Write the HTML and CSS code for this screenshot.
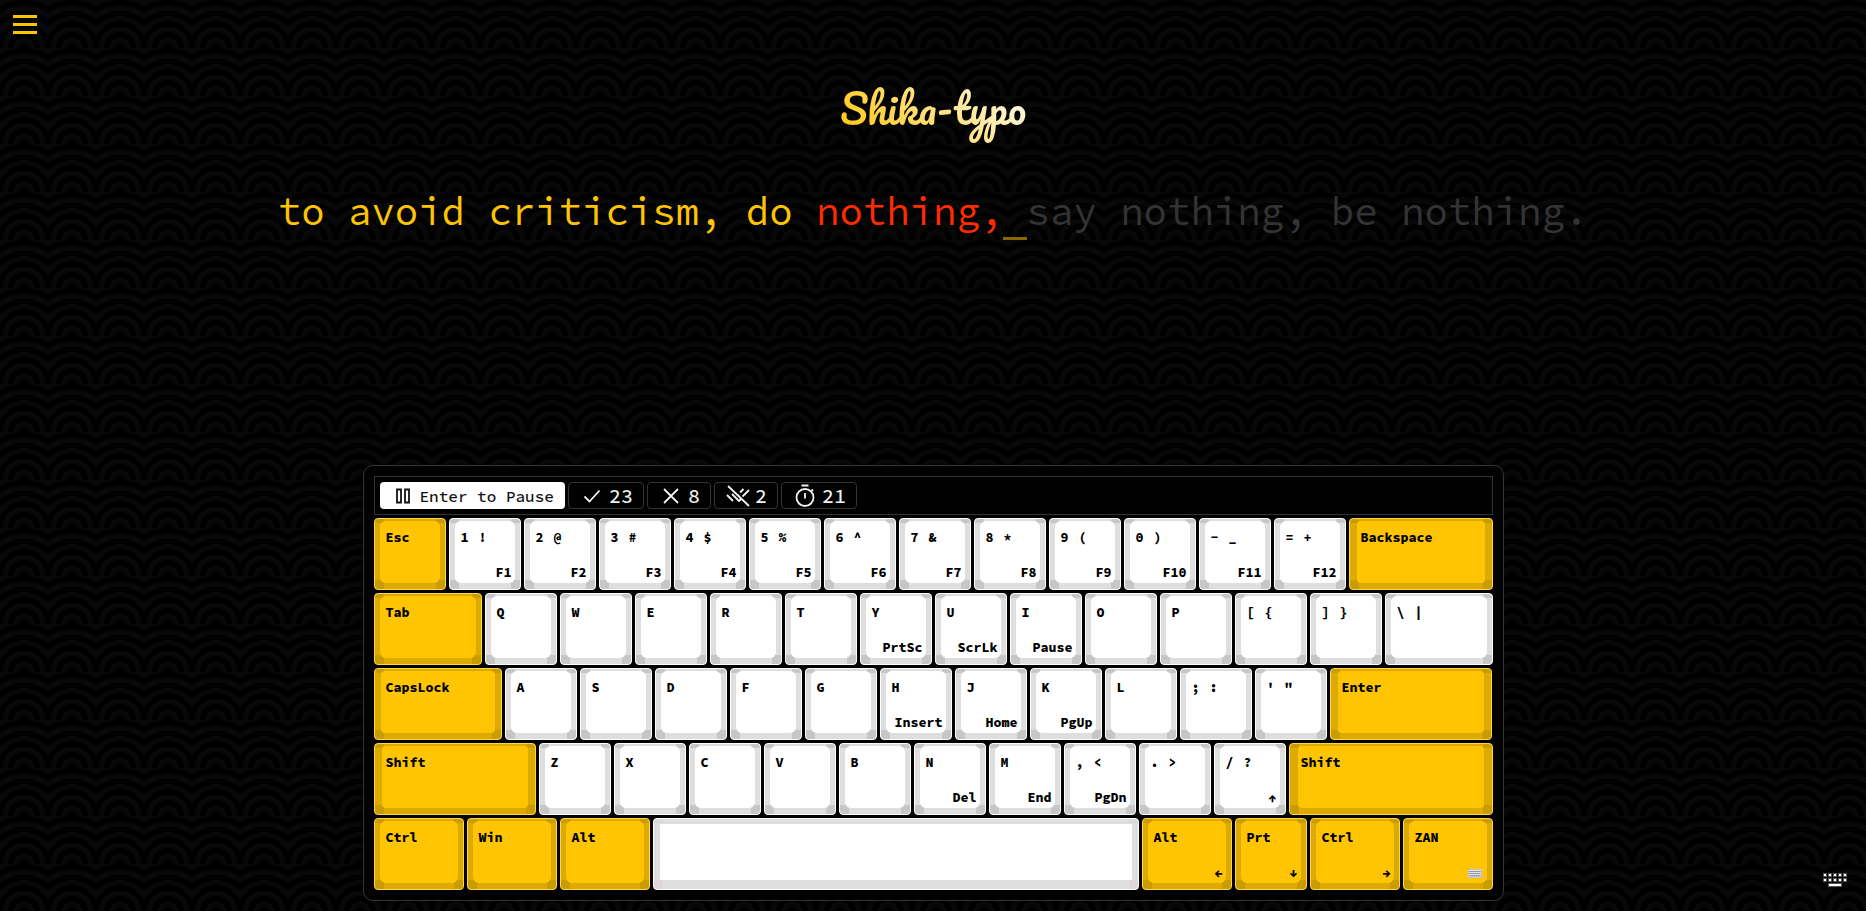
FILE: index.html
```html
<!DOCTYPE html>
<html lang="en">
<head>
<meta charset="utf-8">
<title>Shika-typo</title>
<link rel="stylesheet" href="styles.css">
</head>
<body>
<button class="menu" aria-label="Open menu"><span></span><span></span><span></span></button>
<h1 class="logo">Shika-typo</h1>
<p class="quote"><span class="typed">to avoid criticism, do </span><span class="wrong">nothing,</span><span class="cursor"> </span>say nothing, be nothing.</p>

<main class="board">
  <div class="status">
    <button class="pause"><svg viewBox="0 0 24 24"><path d="M6 5.500h4v13H6zM14 5.500h4v13h-4z"/></svg>Enter to Pause</button>
    <div class="stat"><svg viewBox="0 0 24 24"><path d="M4.500 12.500l5 5L19.500 6.500"/></svg>23</div>
    <div class="stat"><svg viewBox="0 0 24 24"><path d="M5 5l14 14M19 5L5 19"/></svg>8</div>
    <div class="stat"><svg viewBox="0 0 24 24"><path d="M2 2l21 20M1 11l6 6M6 10l7 7 2.500-2.500M12 11l1 1M16.500 12.500L23 6M14 8.500L17.500 5"/></svg>2</div>
    <div class="stat"><svg viewBox="0 0 24 24"><circle cx="12" cy="13.500" r="8.500"/><path d="M8.500 1.500h7M12 9v5.500M18.500 7l1.500-1.500"/></svg>21</div>
  </div>

  <div class="row">
    <button class="key mod"><span class="top">Esc</span></button>
    <button class="key"><span class="top"><i>1</i><i>!</i></span><span class="fn">F1</span></button>
    <button class="key"><span class="top"><i>2</i><i>@</i></span><span class="fn">F2</span></button>
    <button class="key"><span class="top"><i>3</i><i>#</i></span><span class="fn">F3</span></button>
    <button class="key"><span class="top"><i>4</i><i>$</i></span><span class="fn">F4</span></button>
    <button class="key"><span class="top"><i>5</i><i>%</i></span><span class="fn">F5</span></button>
    <button class="key"><span class="top"><i>6</i><i>^</i></span><span class="fn">F6</span></button>
    <button class="key"><span class="top"><i>7</i><i>&amp;</i></span><span class="fn">F7</span></button>
    <button class="key"><span class="top"><i>8</i><i>*</i></span><span class="fn">F8</span></button>
    <button class="key"><span class="top"><i>9</i><i>(</i></span><span class="fn">F9</span></button>
    <button class="key"><span class="top"><i>0</i><i>)</i></span><span class="fn">F10</span></button>
    <button class="key"><span class="top"><i>-</i><i>_</i></span><span class="fn">F11</span></button>
    <button class="key"><span class="top"><i>=</i><i>+</i></span><span class="fn">F12</span></button>
    <button class="key mod w200"><span class="top">Backspace</span></button>
  </div>
  <div class="row">
    <button class="key mod w150"><span class="top">Tab</span></button>
    <button class="key"><span class="top">Q</span></button>
    <button class="key"><span class="top">W</span></button>
    <button class="key"><span class="top">E</span></button>
    <button class="key"><span class="top">R</span></button>
    <button class="key"><span class="top">T</span></button>
    <button class="key"><span class="top">Y</span><span class="fn">PrtSc</span></button>
    <button class="key"><span class="top">U</span><span class="fn">ScrLk</span></button>
    <button class="key"><span class="top">I</span><span class="fn">Pause</span></button>
    <button class="key"><span class="top">O</span></button>
    <button class="key"><span class="top">P</span></button>
    <button class="key"><span class="top"><i>[</i><i>{</i></span></button>
    <button class="key"><span class="top"><i>]</i><i>}</i></span></button>
    <button class="key w150"><span class="top"><i>\</i><i>|</i></span></button>
  </div>
  <div class="row">
    <button class="key mod w175"><span class="top">CapsLock</span></button>
    <button class="key"><span class="top">A</span></button>
    <button class="key"><span class="top">S</span></button>
    <button class="key"><span class="top">D</span></button>
    <button class="key"><span class="top">F</span></button>
    <button class="key"><span class="top">G</span></button>
    <button class="key"><span class="top">H</span><span class="fn">Insert</span></button>
    <button class="key"><span class="top">J</span><span class="fn">Home</span></button>
    <button class="key"><span class="top">K</span><span class="fn">PgUp</span></button>
    <button class="key"><span class="top">L</span></button>
    <button class="key"><span class="top"><i>;</i><i>:</i></span></button>
    <button class="key"><span class="top"><i>'</i><i>"</i></span></button>
    <button class="key mod w225"><span class="top">Enter</span></button>
  </div>
  <div class="row">
    <button class="key mod w225"><span class="top">Shift</span></button>
    <button class="key"><span class="top">Z</span></button>
    <button class="key"><span class="top">X</span></button>
    <button class="key"><span class="top">C</span></button>
    <button class="key"><span class="top">V</span></button>
    <button class="key"><span class="top">B</span></button>
    <button class="key"><span class="top">N</span><span class="fn">Del</span></button>
    <button class="key"><span class="top">M</span><span class="fn">End</span></button>
    <button class="key"><span class="top"><i>,</i><i>&lt;</i></span><span class="fn">PgDn</span></button>
    <button class="key"><span class="top"><i>.</i><i>&gt;</i></span></button>
    <button class="key"><span class="top"><i>/</i><i>?</i></span><span class="fn">↑</span></button>
    <button class="key mod w275"><span class="top">Shift</span></button>
  </div>
  <div class="row">
    <button class="key mod w125"><span class="top">Ctrl</span></button>
    <button class="key mod w125"><span class="top">Win</span></button>
    <button class="key mod w125"><span class="top">Alt</span></button>
    <button class="key space" aria-label="Space"></button>
    <button class="key mod w125"><span class="top">Alt</span><span class="fn">←</span></button>
    <button class="key mod"><span class="top">Prt</span><span class="fn">↓</span></button>
    <button class="key mod w125"><span class="top">Ctrl</span><span class="fn">→</span></button>
    <button class="key mod w125"><span class="top">ZAN</span><span class="fn"><svg class="mini" viewBox="0 0 14 9"><rect width="14" height="9" rx="1" fill="#c4c4d0" stroke="none"/><path d="M1 2.500h12M1 4.500h12M2 6.500h10" stroke="#8a8a9c" stroke-dasharray="1.500 .5"/><path d="M1 1.500h12M1 3.500h12M1 5.500h12" stroke="#e4e4ec"/></svg></span></button>
  </div>
</main>

<button class="toggle" aria-label="Toggle keyboard"><svg viewBox="0 0 24 14"><path fill="#555" d="M0 0h4v4H0zM5 0h4v4H5zM10 0h4v4h-4zM15 0h4v4h-4zM20 0h4v4h-4zM0 5h4v4H0zM5 5h4v4H5zM10 5h4v4h-4zM15 5h4v4h-4zM20 5h4v4h-4zM5 10h14v4H5z"/><path fill="#fff" d="M1 1h2v2H1zM6 1h2v2H6zM11 1h2v2h-2zM16 1h2v2h-2zM21 1h2v2h-2zM1 6h2v2H1zM6 6h2v2H6zM11 6h2v2h-2zM16 6h2v2h-2zM21 6h2v2h-2zM6 11h12v2H6z"/></svg></button>
</body>
</html>
```
FILE: styles.css
```css
* { box-sizing: border-box; }

body {
  margin: 0;
  min-height: 100vh;
  padding: 73px 10px 10px;
  display: flex;
  flex-direction: column;
  align-items: center;
  background: #000 repeating-radial-gradient(circle 32px at 50% 100%, #000 0 16.667%, #080808 16.667% 33.333%) 0 0 / 48px 48px;
  color: #333;
  font-family: "Source Code Pro", "DejaVu Sans Mono", monospace;
}

button {
  margin: 0;
  padding: 0;
  border: 0;
  background: none;
  font-family: inherit;
  color: inherit;
  cursor: pointer;
}

svg { fill: none; stroke: currentColor; stroke-width: 1.8; }

.menu {
  position: absolute;
  top: 15px;
  left: 13px;
  width: 24px;
  display: grid;
  gap: 5px;
}
.menu span { height: 3px; background: #ffc400; }

.toggle { position: absolute; right: 19px; bottom: 24px; width: 24px; height: 14px; }
.toggle svg { display: block; stroke: none; }

.logo {
  margin: 0;
  font: 400 40px/70px Pacifico, cursive;
  background: linear-gradient(45deg, #ffc400, #fff);
  -webkit-background-clip: text;
  background-clip: text;
  color: transparent;
}

.quote {
  margin: 44px 0 32px;
  font-size: 39px;
  line-height: 49px;
  text-align: center;
}
.typed { color: #ffc400; }
.wrong { color: #ff2b00; }
.cursor { padding-bottom: 1px; border-bottom: 3px solid #866700; white-space: pre; }

.board {
  margin-top: auto;
  padding: 10px;
  display: grid;
  gap: 3px;
  border: 1px solid #333;
  border-radius: 10px;
  background: #010101;
}

.status {
  display: flex;
  gap: 3px;
  padding: 5px;
  border: 1px solid #333;
}
.pause, .stat {
  display: flex;
  align-items: center;
  gap: 5px;
  height: 27px;
  padding: 0 10px 0 11px;
  border-radius: 4px;
  font-weight: 500;
}
.pause { padding-right: 11px; background: #fff; color: #111; font-size: 16px; }
.stat { border: 1px solid #333; color: #f2f2f2; font-size: 20px; }
.status svg { width: 24px; height: 24px; }

.row { display: flex; gap: 3px; }

.key {
  --side: 5px;
  --face: #fff;
  --edge: #dedede;
  --corner: #c6c6c6;
  --rim: #fff;
  position: relative;
  isolation: isolate;
  width: 72px;
  height: 72px;
  padding: 10px 8px 8px 11px;
  display: flex;
  flex-direction: column;
  justify-content: space-between;
  border: 1px solid var(--rim);
  border-radius: 4px;
  background:
    linear-gradient(var(--corner) 0 0) 0 0 / 9px 4px no-repeat,
    linear-gradient(var(--corner) 0 0) 100% 0 / 9px 4px no-repeat,
    linear-gradient(var(--corner) 0 0) 0 100% / 9px 9px no-repeat,
    linear-gradient(var(--corner) 0 0) 100% 100% / 9px 9px no-repeat,
    var(--edge);
  color: #000;
  font-size: smaller;
  font-weight: 800;
  line-height: 17px;
}
/* raised face of the keycap */
.key::before {
  content: "";
  position: absolute;
  z-index: -1;
  inset: 2px var(--side) 6px;
  border-radius: 6px;
  background: var(--face);
}
.mod { --face: #ffc502; --edge: #dcaa03; --corner: #c99c04; --rim: #ffd646; }
.w125 { width: 90px; }
.w150 { width: 108px; }
.w175 { width: 128px; --side: 6px; }
.w200 { width: 144px; --side: 7px; }
.w225 { width: 162px; --side: 7px; }
.w275 { width: 204px; --side: 8px; }
.w175::before, .w200::before, .w225::before, .w275::before { border-radius: 4px; }
.space { width: 486px; --side: 6px; --corner: #dcd8d8; }
.space::before { top: 5px; bottom: 9px; border-radius: 1px; }

.top { display: flex; gap: 10px; }
.top i { font-style: normal; }
.fn { align-self: flex-end; }
.mini { display: block; width: 14px; height: 9px; margin: 0 2px 3px 0; stroke-width: 1; }
```
